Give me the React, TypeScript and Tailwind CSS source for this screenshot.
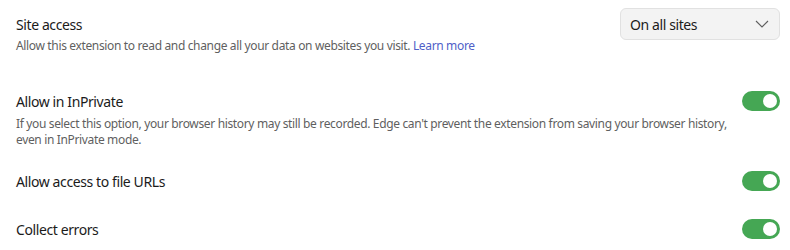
const Toggle = () => (
  <div className="flex h-5 w-[38px] shrink-0 items-center justify-end rounded-full bg-[#45a754] px-[3px]">
    <div className="h-[14px] w-[14px] rounded-full bg-white" />
  </div>
);

const App = () => {
  return (
    <div
      className="h-[250px] w-[790px] bg-white pl-4 pr-[10px] pt-2 text-[#1b1b1b]"
      style={{ fontFamily: '"Noto Sans", "Open Sans", sans-serif' }}
    >
      <div className="flex items-start justify-between">
        <div className="pt-[7px]">
          <div className="text-[14px] leading-5 tracking-[-0.4px]">Site access</div>
          <div className="mt-[3px] text-[12px] leading-4 tracking-[-0.35px] text-[#5f5f5f]">
            Allow this extension to read and change all your data on websites
            you visit. <span className="text-[#4f5fc8]">Learn more</span>
          </div>
        </div>
        <div className="flex h-8 w-40 items-center justify-between rounded-md border border-[#e1e1e1] bg-[#f3f3f3] pl-[9px] pr-[10px] text-[14px] tracking-[-0.4px]">
          <span>On all sites</span>
          <svg width="14" height="8" viewBox="0 0 14 8" fill="none">
            <path d="M1 1l6 6 6-6" stroke="#5f5f5f" strokeWidth="1.1" />
          </svg>
        </div>
      </div>

      <div className="mt-[37px] flex items-start justify-between">
        <div className="pt-px">
          <div className="text-[14px] leading-5 tracking-[-0.4px]">Allow in InPrivate</div>
          <div className="mt-[4px] w-[720px] text-[12px] leading-4 tracking-[-0.35px] text-[#5f5f5f]">
            If you select this option, your browser history may still be
            recorded. Edge can't prevent the extension from saving your browser
            history, even in InPrivate mode.
          </div>
        </div>
        <Toggle />
      </div>

      <div className="mt-[23px] flex items-start justify-between">
        <div className="pt-px text-[14px] leading-5 tracking-[-0.4px]">Allow access to file URLs</div>
        <Toggle />
      </div>

      <div className="mt-[27px] flex items-start justify-between">
        <div className="pt-px text-[14px] leading-5 tracking-[-0.4px]">Collect errors</div>
        <Toggle />
      </div>
    </div>
  );
};

export default App;
